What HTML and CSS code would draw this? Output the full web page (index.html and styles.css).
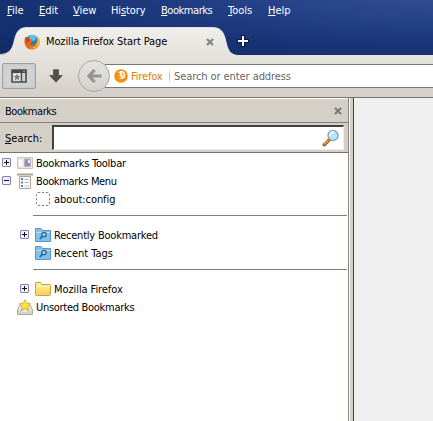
FILE: index.html
```html
<!DOCTYPE html>
<html lang="en">
<head>
<meta charset="utf-8">
<title>Mozilla Firefox Start Page</title>
<link rel="stylesheet" href="styles.css">
</head>
<body>
<div class="window">
  <header class="titlebar">
    <nav class="menubar">
      <span class="m-file"><u>F</u>ile</span><span class="m-edit"><u>E</u>dit</span><span class="m-view"><u>V</u>iew</span><span class="m-history">Hi<u>s</u>tory</span><span class="m-bookmarks"><u>B</u>ookmarks</span><span class="m-tools"><u>T</u>ools</span><span class="m-help"><u>H</u>elp</span>
    </nav>
    <div class="tabs">
      <svg class="tab-shape" width="260" height="29" viewBox="0 0 260 29">
        <defs><linearGradient id="tab" x1="0" y1="0" x2="0" y2="1"><stop offset="0" stop-color="#f0efeb"/><stop offset="1" stop-color="#e5e2dd"/></linearGradient></defs>
        <path d="M0 29V28C9 27 12 23 14 15C16 5 19 0.5 27 0.5H236C245 0.5 248 5 250 15C252 23 254 28 260 28.5V29Z" fill="none"/>
        <path d="M0 29V28C9 27 12 23 14 15C16 5 19 0.5 27 0.5H212C221 0.5 224 5 226 15C228 23 230 28 238 28.5V29Z" fill="url(#tab)"/>
        <path d="M0 27.5C9 27 12 23 14 15C16 5 19 0.5 27 0.5H212C221 0.5 224 5 226 15C228 23 230 28 238 28.5" fill="none" stroke="#f8f8f5" stroke-opacity=".75"/>
      </svg>
      <div class="tab">
        <svg class="fox" width="16" height="16" viewBox="0 0 16 16">
          <circle cx="8" cy="8" r="7" fill="#2382c4"/><path d="M5 2Q9-1 13 3L10 7 5 6Z" fill="#64bde8"/>
          <path d="M1.2 3Q0 6 .5 9C1.5 14 5 15.8 8.5 15.5 13 15 15.8 11.5 15.5 7.5Q15 4 13 2.7 14 6 12 9.5C9.5 12.5 6.5 11.3 6 9.5L8.2 8.6 6.7 6.7 7.5 5 4.5 4Z" fill="#e76a13"/>
          <path d="M15.3 5Q16 10 12.6 13 9 15.5 6 14 11 13.5 12.5 9.7 14 7 13.2 3.5Z" fill="#f9b52c"/><path d="M1.5 3.5 4.5 4 6.5 6Q3 7 4 10L2 8Z" fill="#c64512"/>
        </svg>
        <span class="tab-title">Mozilla Firefox Start Page</span>
        <svg class="tab-close" width="8" height="8" viewBox="0 0 8 8"><path d="M1 1 7 7M7 1 1 7" stroke="#7f8790" stroke-width="2.3"/></svg>
      </div>
      <svg class="plus" width="14" height="14" viewBox="0 0 14 14"><path d="M7 1V13M1 7H13" stroke="#0a1941" stroke-width="4"/><path d="M7 2V12M2 7H12" stroke="#fff" stroke-width="2"/></svg>
    </div>
  </header>
  <div class="toolbar">
    <div class="tool-button">
      <svg width="16" height="14" viewBox="0 0 16 14"><path d="M1 1H15V13H1Z" fill="#dedddd" stroke="#4b4946" stroke-width="1.6"/><path d="M1 1H15V4H1Z" fill="#4b4946"/><path d="M10.5 4V13" stroke="#4b4946" stroke-width="1.4"/><path d="M12 2.2H14M12.8 5V12" stroke="#bbb9b5" stroke-width=".8"/><path d="M6 4.5 7 7H9.5L7.5 8.7 8.3 11.5 6 9.8 3.7 11.5 4.5 8.7 2.5 7H5Z" fill="#77797c"/></svg>
    </div>
    <svg class="download" width="14" height="14" viewBox="0 0 14 14"><path d="M4.5.7H9.5V6.5H13.2L7 13.2.8 6.5H4.5Z" fill="#55524c" stroke="#47443e" stroke-width=".7"/></svg>
    <div class="navigation">
      <div class="url">
        <svg class="mono-fox" width="14" height="14" viewBox="0 0 14 14"><circle cx="7" cy="7" r="6.8" fill="#f5910b"/><path d="M3.5 3.5Q4.8 3.5 5.6 2.2 9 1 10.8 4 12 7 9.8 9.2 7.5 11 4.7 9.2 7 9.4 8 8 5.5 8 5 6.5L7 6 5.7 5.4 6.2 4Z" fill="#fff"/><path d="M8 3Q11 5 9 8L7.8 7.2Z" fill="#f9b04e"/></svg>
        <span class="brand">Firefox</span><span class="divider"></span><span class="placeholder">Search or enter address</span>
      </div>
      <div class="back"><svg width="15" height="14" viewBox="0 0 15 14"><path d="M7.7 1 2 7 7.7 13M2.5 7H14.5" fill="none" stroke="#969492" stroke-width="3.2"/></svg></div>
    </div>
  </div>
  <div class="content">
    <aside class="sidebar">
      <div class="sidebar-head"><span class="side-title">Bookmarks</span><svg width="8" height="8" viewBox="0 0 8 8"><path d="M1 1 7 7M7 1 1 7" stroke="#747b81" stroke-width="2.2"/></svg></div>
      <div class="search-row"><label class="search-label"><u>S</u>earch:</label><div class="search-box">
        <svg width="18" height="18" viewBox="0 0 18 18"><path d="M7.5 10.5 2.3 15.7" stroke="#a36032" stroke-width="3.5" stroke-linecap="round"/><path d="M6.5 11 2 15" stroke="#ef9b3d" stroke-width="2"/><circle cx="11" cy="6.5" r="5" fill="#b9e6fa" stroke="#82a5c0" stroke-width="1.4"/><path d="M8 7Q8 3 12 3" fill="none" stroke="#effbff" stroke-width="1.8"/></svg>
      </div></div>
      <div class="tree">
        <div class="row"><i class="toggle closed"></i><svg class="icon" width="16" height="16" viewBox="0 0 16 16"><path d="M.5 2.5H15.5V13.5H.5Z" fill="#ece9e4" stroke="#cbc5bc"/><path d="M2 5H5V11H2Z" fill="#fff"/><path d="M7.5 4H13.5V11.5H7.5Z" fill="#9590b8" stroke="#b8b2c9"/><path d="M11 5H13V8H11Z" fill="#e9e5f4"/></svg><span class="t-toolbar">Bookmarks Toolbar</span></div>
        <div class="row"><i class="toggle"></i><svg class="icon" width="16" height="16" viewBox="0 0 16 16"><path d="M0 1.5H16" stroke="#aaa397" stroke-width="2"/><path d="M2.5 3.5H13.5V15.5H2.5Z" fill="#fff" stroke="#aaa49b"/><path d="M4 5H6V7H4Z" fill="#4386c8"/><path d="M4 8.5H6V10.5H4Z" fill="#49a17b"/><path d="M4 12H6V14H4Z" fill="#6a73c3"/><path d="M7.5 6.5H12M7.5 9.5H12M7.5 13H12" stroke="#bbb"/></svg><span class="t-menu">Bookmarks Menu</span></div>
        <div class="row nested"><i class="spacer"></i><svg class="icon" width="16" height="16" viewBox="0 0 16 16"><rect x="1.5" y="1.5" width="13" height="13" rx="1.5" fill="none" stroke="#888" stroke-dasharray="2.4 1.6"/></svg><span class="t-config">about:config</span></div>
        <div class="separator"></div>
        <div class="row nested"><i class="toggle closed"></i><svg class="icon" width="16" height="16" viewBox="0 0 16 16"><path d="M.5 1.5H6L7.5 3.5H15.5V14.5H.5Z" fill="#82c1eb" stroke="#5897c5"/><path d="M1 5.5H15" stroke="#b9e0f6"/><circle cx="9" cy="7.5" r="2.2" fill="#a9d8f3" stroke="#29658f" stroke-width="1.3"/><path d="M7.3 9.3 4.8 12" stroke="#29658f" stroke-width="1.7"/></svg><span class="t-recent">Recently Bookmarked</span></div>
        <div class="row nested"><i class="spacer"></i><svg class="icon" width="16" height="16" viewBox="0 0 16 16"><path d="M.5 1.5H6L7.5 3.5H15.5V14.5H.5Z" fill="#82c1eb" stroke="#5897c5"/><path d="M1 5.5H15" stroke="#b9e0f6"/><circle cx="9" cy="7.5" r="2.2" fill="#a9d8f3" stroke="#29658f" stroke-width="1.3"/><path d="M7.3 9.3 4.8 12" stroke="#29658f" stroke-width="1.7"/></svg><span class="t-tags">Recent Tags</span></div>
        <div class="separator"></div>
        <div class="row nested"><i class="toggle closed"></i><svg class="icon" width="16" height="16" viewBox="0 0 16 16"><defs><linearGradient id="folder" x1="0" y1="0" x2="0" y2="1"><stop stop-color="#fff3a0"/><stop offset="1" stop-color="#f4cd55"/></linearGradient></defs><path d="M.5 13.5V2Q.5 1.5 1 1.5H5.5L7 3.5H14.5Q15.5 3.5 15.5 4.5V13.5Q15.5 14.5 14.5 14.5H1.5Q.5 14.5.5 13.5Z" fill="url(#folder)" stroke="#c9a247"/><path d="M1.5 5.5H14.5" stroke="#fff9c9"/></svg><span class="t-mozilla">Mozilla Firefox</span></div>
        <div class="row"><i class="spacer"></i><svg class="icon" width="16" height="16" viewBox="0 0 16 16"><path d="M3 6H13L15.5 11V15.5H.5V11Z" fill="#e9e8e4" stroke="#aaa79e"/><path d="M1 11.5H5L6 13H10L11 11.5H15V15H1Z" fill="#d4d2cb"/><path d="M8 .7 9.8 4.3 13.7 4.8 10.8 7.5 11.6 11.5 8 9.5 4.4 11.5 5.2 7.5 2.3 4.8 6.2 4.3Z" fill="#fbe04a" stroke="#d3a51e" stroke-width=".8"/></svg><span class="t-unsorted">Unsorted Bookmarks</span></div>
      </div>
    </aside>
    <div class="splitter"></div>
    <main class="page"></main>
  </div>
</div>
</body>
</html>
```
FILE: styles.css
```css
* { box-sizing: border-box; }
body { margin: 0; font: 11px/18px "DejaVu Sans Condensed", "DejaVu Sans", sans-serif; font-stretch: condensed; color: #000; }
svg { display: block; flex: none; }
span, label { white-space: nowrap; }
u { text-underline-offset: 1px; text-decoration-thickness: 1px; }
.window { width: 433px; height: 421px; overflow: hidden; display: flex; flex-direction: column; }
.titlebar { height: 55px; background: radial-gradient(ellipse at 105% -10%, #36528e 0, #26428a 30%, #183374 65%, #102b67 100%); border-bottom: 1px solid #1b3163; }
.menubar { height: 27px; padding: 2px 0 0 7px; display: flex; color: #fff; }
.m-file { width: 32px; }
.m-edit { width: 34px; }
.m-view { width: 38px; }
.m-history { width: 50px; letter-spacing: -.12px; }
.m-bookmarks { width: 67px; letter-spacing: -.45px; }
.m-tools { width: 40px; }
.tabs { height: 28px; display: grid; grid-template-columns: 237px 1fr; }
.tab-shape, .tab, .plus { grid-row: 1; }
.tab-shape, .tab { grid-column: 1; }
.tab { display: flex; align-items: center; padding: 0 23px 0 24px; z-index: 1; }
.tab-title { letter-spacing: -.12px; }
.fox { margin-right: 6px; }
.tab-close { margin-left: auto; }
.plus { grid-column: 2; margin-top: 7px; margin-left: -1px; z-index: 1; }
.toolbar { height: 43px; background: linear-gradient(#e6e3de, #d4cfc8); border-bottom: 1px solid #77736f; display: flex; align-items: center; padding-left: 2px; }
.tool-button { width: 34px; height: 26px; margin-right: 13px; border: 1px solid #9ba1ac; border-radius: 2px; background: #d1d1d1; box-shadow: inset 0 0 2px #aeb1b9; display: grid; place-items: center; }
.navigation { display: grid; grid-template-columns: 27px 1fr; flex: 1; margin-left: 15px; height: 32px; align-items: center; }
.url { grid-column: 2; grid-row: 1; height: 24px; background: #fff; border: solid #777673; border-width: 1px 0; display: flex; align-items: center; padding-left: 9px; color: #666; }
.back { grid-column: 1; grid-row: 1; width: 32px; height: 32px; border: 1px solid #aaa8a4; border-radius: 50%; background: linear-gradient(#e5e3e0, #d4d1cd); display: grid; place-items: center; z-index: 1; }
.mono-fox { margin-right: 3px; }
.brand { color: #df7b09; width: 38px; letter-spacing: -.15px; padding-top: 2px; }
.placeholder { letter-spacing: -.08px; padding-top: 2px; }
.divider { height: 18px; width: 1px; background: linear-gradient(#fff, #e5ab72, #fff); margin-right: 4px; }
.content { display: flex; flex: 1; min-height: 0; }
.sidebar { width: 349px; background: #fff; border-right: 1px solid #83827e; display: flex; flex-direction: column; }
.sidebar-head { height: 25px; border-top: 1px solid #fff; border-bottom: 1px solid #85817a; background: #d4d0c8; display: flex; align-items: center; justify-content: space-between; padding: 1px 6px 0 5px; }
.side-title { letter-spacing: -.45px; padding-top: 2px; }
.search-row { height: 30px; border-bottom: 1px solid #77746f; background: #d4d0c8; display: flex; align-items: center; padding: 0 4px 0 5px; }
.search-label { width: 47px; padding-top: 2px; }
.search-box { height: 25px; flex: 1; background: #fff; border: 1px solid #eee; border-top: 2px solid #424242; border-left: 2px solid #424242; display: flex; align-items: center; justify-content: flex-end; padding-right: 3px; }
.tree { padding-top: 1px; }
.row { height: 18px; display: flex; align-items: center; padding-left: 2px; }
.row span { padding-top: 2px; }
.t-toolbar { letter-spacing: -.24px; }
.t-menu { letter-spacing: -.35px; }
.t-config { letter-spacing: -.06px; }
.t-recent { letter-spacing: -.22px; }
.t-mozilla { letter-spacing: -.08px; }
.t-unsorted { letter-spacing: -.29px; }
.nested { padding-left: 20px; }
.toggle, .spacer { width: 9px; height: 9px; margin: 0 6px 1px 0; flex: none; }
.toggle { border: 1px solid #827fc5; border-radius: 1px; background: linear-gradient(#111, #111) center / 5px 1px no-repeat, #f1f0fc; }
.closed { background: linear-gradient(#111, #111) center / 5px 1px no-repeat, linear-gradient(#111, #111) center / 1px 5px no-repeat, #f1f0fc; }
.icon { margin-right: 3px; }
.separator { height: 18px; margin-left: 33px; margin-right: 1px; background: linear-gradient(#808080, #808080) 0 7px / 100% 1px no-repeat; }
.splitter { width: 5px; border-left: 1px solid #fff; border-right: 1px solid #42413c; background: #d4d0c8; }
.page { flex: 1; background: #f0f0f0; }
```
